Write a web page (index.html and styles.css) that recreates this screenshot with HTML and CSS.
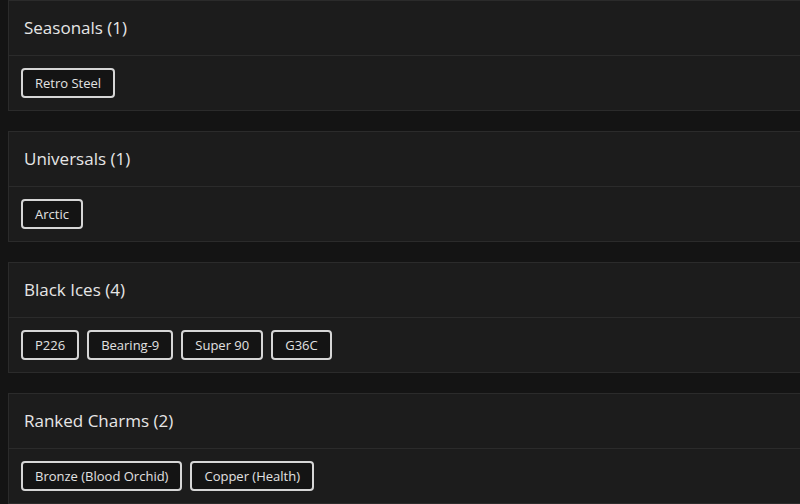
FILE: index.html
```html
<!DOCTYPE html>
<html>
<head>
<meta charset="utf-8">
<link rel="stylesheet" href="styles.css">
</head>
<body>
<main class="list">
  <section class="card">
    <header class="card-head"><h2 class="card-title">Seasonals (1)</h2></header>
    <div class="card-body">
      <span class="tag">Retro Steel</span>
    </div>
  </section>
  <section class="card">
    <header class="card-head"><h2 class="card-title">Universals (1)</h2></header>
    <div class="card-body">
      <span class="tag">Arctic</span>
    </div>
  </section>
  <section class="card">
    <header class="card-head"><h2 class="card-title">Black Ices (4)</h2></header>
    <div class="card-body">
      <span class="tag">P226</span>
      <span class="tag">Bearing-9</span>
      <span class="tag">Super 90</span>
      <span class="tag">G36C</span>
    </div>
  </section>
  <section class="card">
    <header class="card-head"><h2 class="card-title">Ranked Charms (2)</h2></header>
    <div class="card-body">
      <span class="tag">Bronze (Blood Orchid)</span>
      <span class="tag">Copper (Health)</span>
    </div>
  </section>
</main>
</body>
</html>
```
FILE: styles.css
```css
html, body {
  margin: 0;
  padding: 0;
  overflow: hidden;
  background: #141414;
}
body {
  font-family: "Open Sans", "DejaVu Sans", sans-serif;
  color: #e4e4e4;
}
.list {
  display: flex;
  flex-direction: column;
  gap: 20px;
  margin-left: 8px;
  width: 800px;
}
.card {
  background: #1c1c1c;
  border: 1px solid #2b2b2b;
}
.card-head {
  padding: 16px 15px;
  border-bottom: 1px solid #2b2b2b;
}
.card-title {
  margin: 0;
  font-size: 17px;
  line-height: 22px;
  font-weight: 500;
  color: #e6e6e6;
}
.card-body {
  display: flex;
  gap: 8px;
  padding: 12px 12px;
}
.tag {
  display: inline-flex;
  align-items: center;
  height: 30px;
  box-sizing: border-box;
  padding: 0 12px;
  border: 2px solid #d6d6d6;
  border-radius: 4px;
  background: #141414;
  font-size: 13px;
  color: #e2e2e2;
}
```
